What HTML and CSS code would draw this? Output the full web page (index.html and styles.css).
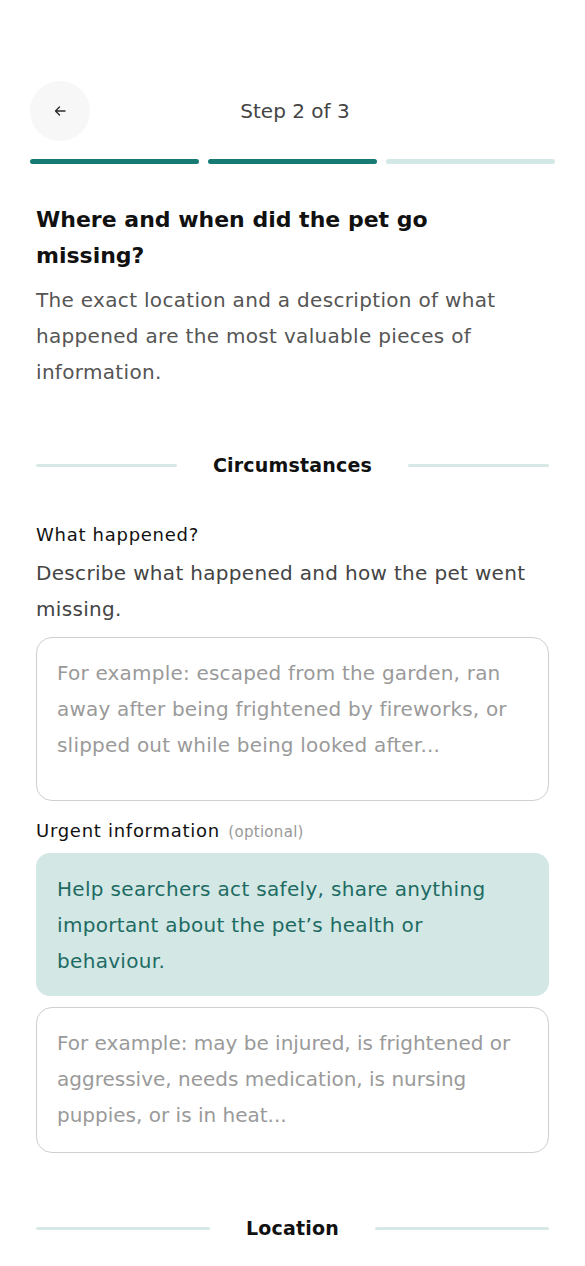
FILE: index.html
```html
<!DOCTYPE html>
<html lang="en">
<head>
<meta charset="utf-8">
<title>Report missing pet – Step 2 of 3</title>
<link rel="stylesheet" href="styles.css">
</head>
<body>
<div class="page">
  <header class="topbar">
    <button class="back" aria-label="Back">
      <svg width="14" height="14" viewBox="0 0 14 14" fill="none" stroke="#2b2b2b" stroke-width="1.4" stroke-linecap="round" stroke-linejoin="round"><path d="M12 7H2.5M6.5 3L2.5 7L6.5 11"/></svg>
    </button>
    <div class="step">Step 2 of 3</div>
    <div class="spacer"></div>
  </header>
  <div class="progress">
    <span class="seg done"></span>
    <span class="seg done"></span>
    <span class="seg"></span>
  </div>

  <main class="content">
    <h1 class="title">Where and when did the pet go missing?</h1>
    <p class="lead">The exact location and a description of what happened are the most valuable pieces of information.</p>

    <div class="divider"><span class="line"></span><span class="divider-text">Circumstances</span><span class="line"></span></div>

    <div class="field what">
      <label class="label">What happened?</label>
      <p class="help">Describe what happened and how the pet went missing.</p>
      <textarea class="input tall" placeholder="For example: escaped from the garden, ran away after being frightened by fireworks, or slipped out while being looked after..."></textarea>
    </div>

    <div class="field urgent">
      <label class="label">Urgent information <span class="optional">(optional)</span></label>
      <div class="notice">Help searchers act safely, share anything important about the pet’s health or behaviour.</div>
      <textarea class="input short" placeholder="For example: may be injured, is frightened or aggressive, needs medication, is nursing puppies, or is in heat..."></textarea>
    </div>

    <div class="divider location"><span class="line"></span><span class="divider-text">Location</span><span class="line"></span></div>
  </main>
</div>
</body>
</html>
```
FILE: styles.css
```css
* { box-sizing: border-box; }
html, body { margin: 0; padding: 0; background: #fff; }
body {
  font-family: "DejaVu Sans", "Open Sans", sans-serif;
  color: #111;
  letter-spacing: 0.02em;
}
.page { width: 585px; padding-top: 81px; }

.topbar {
  display: grid;
  grid-template-columns: 60px 1fr 60px;
  align-items: center;
  padding: 0 30px;
}
.back {
  width: 60px; height: 60px;
  border: none; border-radius: 50%;
  background: #f7f7f7;
  display: flex; align-items: center; justify-content: center;
  padding: 0;
}
.step {
  text-align: center;
  font-size: 20px;
  letter-spacing: 0;
  color: #444;
  padding-left: 5px;
}

.progress {
  display: flex;
  gap: 9px;
  padding: 0 30px;
  margin-top: 18px;
}
.seg {
  flex: 1;
  height: 5px;
  border-radius: 3px;
  background: #d3e8e6;
}
.seg.done { background: #177b73; }

.content { padding: 38px 36px 0; }

.title {
  margin: 0;
  font-size: 22px;
  line-height: 36px;
  font-weight: 700;
  letter-spacing: 0;
  color: #111;
  padding-right: 90px;
}
.lead {
  margin: 8px 0 0;
  font-size: 20px;
  line-height: 36px;
  color: #555;
}

.divider {
  display: flex;
  align-items: center;
  gap: 36px;
  margin-top: 57px;
}
.divider .line { flex: 1; height: 3px; background: #d7e9e7; border-radius: 2px; }
.divider-text { font-size: 19px; font-weight: 700; line-height: 36px; color: #111; letter-spacing: 0.01em; }
.divider.location { margin-top: 57px; }

.field { display: flex; flex-direction: column; }
.field.what { margin-top: 38px; }
.label {
  font-size: 18px;
  line-height: 28px;
  letter-spacing: 0.04em;
  color: #111;
}
.optional { font-size: 15px; color: #999; letter-spacing: 0.02em; margin-left: 2px; }
.help {
  margin: 6px 0 0;
  font-size: 20px;
  line-height: 36px;
  color: #444;
}
.input {
  display: block;
  width: 100%;
  margin-top: 10px;
  border: 1px solid #cfcfcf;
  border-radius: 16px;
  padding: 17px 20px;
  font-family: inherit;
  letter-spacing: 0.01em;
  font-size: 20px;
  line-height: 36px;
  color: #333;
  resize: none;
  background: #fff;
  overflow: hidden;
}
.input::placeholder { color: #9a9a9a; }
.input.tall { height: 164px; }
.input.short { height: 146px; margin-top: 11px; letter-spacing: 0; }

.urgent { margin-top: 16px; }
.notice {
  margin-top: 7px;
  background: #d3e7e5;
  border-radius: 14px;
  padding: 18px 21px 17px;
  font-size: 20px;
  line-height: 36px;
  color: #1d6b63;
}
```
